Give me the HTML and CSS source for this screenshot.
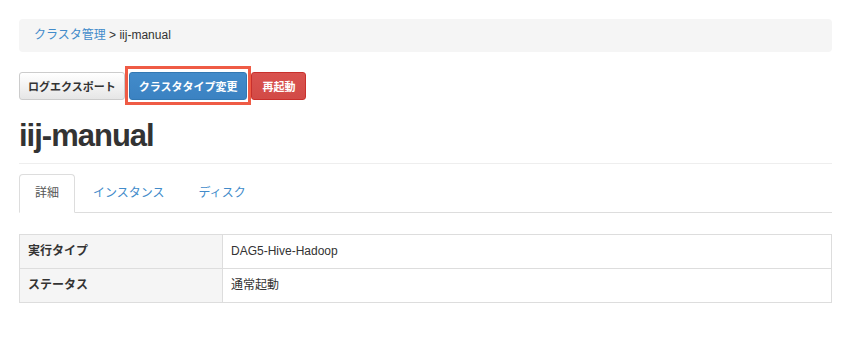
FILE: index.html
```html
<!DOCTYPE html>
<html lang="ja">
<head>
    <meta charset="UTF-8">
    <meta name="viewport" content="width=device-width, initial-scale=1.0">
    <title>iij-manual</title>
    <link rel="stylesheet" href="styles.css">
</head>
<body>
    <div class="page">
        <div class="fil">
            <a href="#">クラスタ管理</a> &gt; iij-manual
        </div>
        <div class="actions">
            <button type="button" class="btn btn-gris">ログエクスポート</button>
            <span class="repere">
                <button type="button" class="btn btn-bleu">クラスタタイプ変更</button>
            </span>
            <button type="button" class="btn btn-rouge">再起動</button>
        </div>
        <h1 class="titre">iij-manual</h1>
        <ul class="onglets">
            <li class="actif"><a href="#">詳細</a></li>
            <li><a href="#">インスタンス</a></li>
            <li><a href="#">ディスク</a></li>
        </ul>
        <table class="infos">
            <tr>
                <th>実行タイプ</th>
                <td>DAG5-Hive-Hadoop</td>
            </tr>
            <tr>
                <th>ステータス</th>
                <td>通常起動</td>
            </tr>
        </table>
    </div>
</body>
</html>
```

FILE: styles.css
```css
body {
    font-family: "Liberation Sans", "Noto Sans CJK JP", sans-serif;
    font-size: 12px;
    line-height: 17px;
    color: #333;
    background-color: #fff;
    margin: 0;
    padding: 0;
}
a {
    color: #428bca;
    text-decoration: none;
}
.page {
    width: 813px;
    margin: 0 0 0 19px;
    padding-top: 19px;
}
.fil {
    background-color: #f5f5f5;
    border-radius: 4px;
    padding: 8px 15px;
    margin-bottom: 20px;
}
.actions {
    display: flex;
    gap: 4px;
    align-items: center;
}
.btn {
    font-family: inherit;
    font-size: 11px;
    font-weight: bold;
    height: 28px;
    padding: 0 9px;
    border: 1px solid #ccc;
    border-radius: 3px;
    cursor: pointer;
}
.btn-gris {
    color: #333;
    padding: 0 8px;
    background: linear-gradient(#fff, #e6e6e6);
    border-color: #ccc;
}
.btn-bleu {
    color: #fff;
    background: linear-gradient(#428bca, #3b82c2);
    border-color: #3278b3;
}
.btn-rouge {
    color: #fff;
    padding: 0 10px;
    background: linear-gradient(#d9534f, #d24a46);
    border-color: #c9302c;
}
/* cadre rouge d'annotation autour du bouton */
.repere {
    position: relative;
    display: flex;
}
.repere::after {
    content: "";
    position: absolute;
    top: -6px;
    bottom: -5px;
    left: -4px;
    right: -4px;
    border: 3px solid #ef5b45;
    pointer-events: none;
}
.titre {
    font-size: 31px;
    line-height: 36px;
    font-weight: bold;
    letter-spacing: -1px;
    margin: 18px 0 0 0;
    padding-bottom: 9px;
    border-bottom: 1px solid #eee;
}
.onglets {
    list-style: none;
    display: flex;
    margin: 10px 0 0 0;
    padding: 0;
    border-bottom: 1px solid #ddd;
}
.onglets li {
    margin: 0 2px -1px 0;
}
.onglets a {
    display: block;
    padding: 10px 15px;
    border: 1px solid transparent;
    border-radius: 4px 4px 0 0;
}
.onglets .actif a {
    color: #555;
    background-color: #fff;
    border-color: #ddd #ddd transparent #ddd;
}
.infos {
    width: 100%;
    border-collapse: collapse;
    margin-top: 21px;
}
.infos th,
.infos td {
    border: 1px solid #ddd;
    padding: 8px;
    text-align: left;
    vertical-align: middle;
}
.infos th {
    width: 25%;
    background-color: #f5f5f5;
    font-weight: bold;
}
```
